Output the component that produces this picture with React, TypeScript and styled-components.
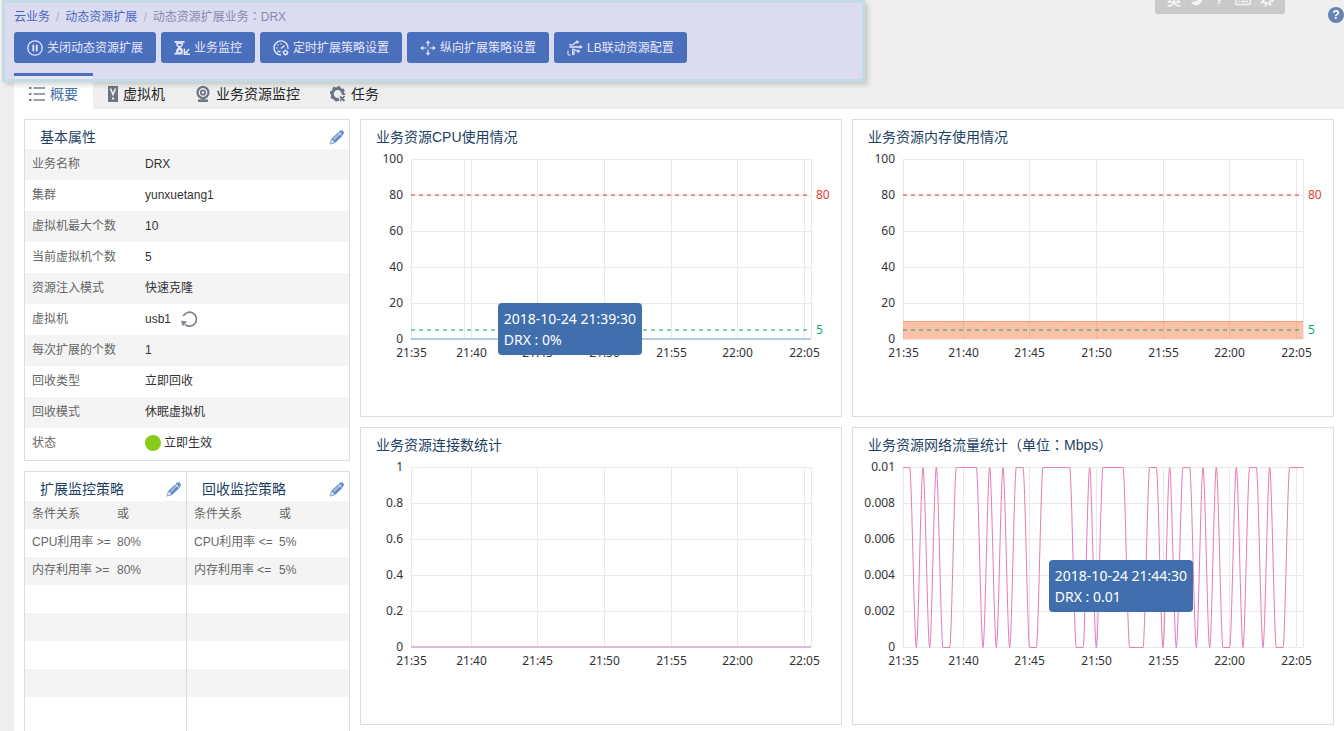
import React, { useLayoutEffect, useRef, useState } from "react";
import styled, { createGlobalStyle } from "styled-components";

const GlobalStyle = createGlobalStyle`
  *, *::before, *::after { box-sizing: border-box; }
  body {
    margin: 0;
    background: #efefef;
    color: #333;
    font: 12px/18px "Liberation Sans", "Noto Sans CJK SC", sans-serif;
  }
  button { font: inherit; }
`;

const Shell = styled.div`
  position: relative;
  display: flex;
  flex-direction: column;
  height: 100vh;
  overflow: hidden;
`;

const Header = styled.header`
  display: flex;
  flex-direction: column;
  gap: 6px;
  padding: 8px 14px 10px;
`;

const Breadcrumb = styled.nav`
  display: flex;
  gap: 6px;
  color: #77798a;
`;

const Crumb = styled.a`
  color: #144ba8;
  text-decoration: none;
`;

const Slash = styled.span`
  color: #aaabb5;
`;

/* Full-width punctuation centred in its cell */
const Punctuation = styled.span`
  font-family: "Noto Sans CJK TC", sans-serif;
  line-height: 1;
`;

const Toolbar = styled.div`
  display: flex;
  gap: 5px;
`;

const ToolButton = styled.button`
  display: flex;
  align-items: center;
  gap: 4px;
  height: 31px;
  padding: 1px 13px 0;
  border: 0;
  border-radius: 3px;
  background: #1f54a5;
  color: #fff;
  white-space: nowrap;
`;

const Highlight = styled.div`
  position: absolute;
  top: 0;
  left: 2px;
  width: 863px;
  height: 82px;
  border: 3px solid #c3dbe6;
  background: rgba(176, 176, 245, 0.3);
  background-clip: padding-box;
  box-shadow: 3px 3px 5px rgba(0, 0, 0, 0.16);
  pointer-events: none;
`;

const InputMethodBar = styled.div`
  position: absolute;
  top: -14px;
  right: 59px;
  display: flex;
  align-items: center;
  justify-content: space-between;
  width: 130px;
  height: 28px;
  padding: 0 10px 0 12px;
  border-radius: 3px;
  background: #cacaca;
  color: #f3f3f3;
  font-size: 14px;
  font-weight: 700;
`;

const HelpButton = styled.button`
  position: absolute;
  top: 7px;
  right: 0;
  width: 16px;
  height: 16px;
  padding: 0;
  border: 0;
  border-radius: 8px;
  background: #6485b1;
  color: #fff;
  font-weight: 700;
  line-height: 16px;
`;

const Tabs = styled.div`
  display: flex;
  flex: none;
  height: 36px;
  padding-left: 14px;
`;

const Tab = styled.button<{ $active?: boolean }>`
  display: flex;
  align-items: center;
  gap: 5px;
  padding: 3px 15px 0;
  border: 0;
  border-top: 3px solid ${(p) => (p.$active ? "#1f54a5" : "transparent")};
  background: ${(p) => (p.$active ? "#fff" : "transparent")};
  color: ${(p) => (p.$active ? "#4673a8" : "#262626")};
  font-size: 14px;
`;

const Content = styled.main`
  display: grid;
  grid-template-columns: 326px minmax(0, 1fr);
  gap: 10px;
  flex: 1;
  margin-left: 14px;
  padding: 10px;
  background: #fff;
`;

const SideColumn = styled.div`
  display: flex;
  flex-direction: column;
  gap: 10px;
`;

const ChartGrid = styled.div`
  display: grid;
  grid-template-columns: repeat(2, minmax(0, 1fr));
  grid-auto-rows: 298px;
  gap: 10px;
`;

const Panel = styled.section`
  position: relative;
  padding-bottom: 1px;
  border: 1px solid #ddd;
  background: #fff;
`;

const PanelHead = styled.div`
  display: flex;
  align-items: center;
  justify-content: space-between;
  height: 29px;
  padding: 5px 4px 0 15px;
`;

const PanelTitle = styled.h2`
  margin: 0;
  color: #1d3f63;
  font-size: 14px;
  font-weight: 400;
  line-height: 20px;
  white-space: nowrap;
`;

const IconButton = styled.button`
  display: inline-flex;
  padding: 0;
  border: 0;
  background: transparent;
`;

const PolicyPair = styled.div`
  display: grid;
  grid-template-columns: 161px 1fr;
  min-height: 270px;
  border: 1px solid #ddd;
`;

const Policy = styled.section`
  & + & {
    border-left: 1px solid #ddd;
  }
`;

const DataTable = styled.table<{ $rowHeight: number; $labelWidth: number }>`
  width: 100%;
  border-collapse: collapse;
  table-layout: fixed;
  tr {
    height: ${(p) => p.$rowHeight}px;
  }
  tr:nth-child(odd) {
    background: #f4f4f4;
  }
  th,
  td {
    padding: 0 0 2px;
    text-align: left;
    font-weight: 400;
    white-space: nowrap;
  }
  th {
    width: ${(p) => p.$labelWidth}px;
    padding-left: 7px;
    color: #666;
  }
`;

const MutedCell = styled.td`
  color: #666;
`;

const Inline = styled.span<{ $gap: number }>`
  display: flex;
  align-items: center;
  gap: ${(p) => p.$gap}px;
`;

const StatusDot = styled.span`
  width: 16px;
  height: 16px;
  border-radius: 50%;
  background: #89cb1a;
`;

const PlotArea = styled.div`
  height: 266px;
  svg {
    display: block;
  }
  text {
    font: 12px "Noto Sans", sans-serif;
    fill: #333;
  }
`;

const Tooltip = styled.div<{ $left: number; $top: number }>`
  position: absolute;
  left: ${(p) => p.$left}%;
  top: ${(p) => p.$top}px;
  padding: 5px 6px;
  border-radius: 4px;
  background: #416fae;
  color: #fff;
  font: 14px/21px "Noto Sans", sans-serif;
  white-space: nowrap;
`;

/* ---------- icons ---------- */

const iconProps = { width: 16, height: 16, viewBox: "0 0 16 16", fill: "none", "aria-hidden": true };

const PauseIcon = () => (
  <svg {...iconProps} stroke="currentColor">
    <circle cx="8" cy="8" r="7.2" strokeWidth="1.3" />
    <path d="M6.3 4.8v6.4M9.7 4.8v6.4" strokeWidth="1.8" />
  </svg>
);

const HourglassIcon = () => (
  <svg {...iconProps} fill="currentColor">
    <path d="M.5 1h10v1.800H.5zM.5 12.800h8v1.700h-8z" />
    <path d="M2 2.800h7.200c0 2.300-.9 3.700-2.400 4.700 1 .7 1.700 1.500 2 2.800v2.500H2c0-2.600.8-4.100 2.300-5.300C2.800 6.500 2 5.100 2 2.800z" />
    <path d="M3.600 4h4c-.3 1-.9 1.600-2 2.200C4.500 5.600 3.900 5 3.600 4zM3.800 11.800l1.800-2 1.700 2z" fill="#1f54a5" />
    <path d="M10.300 8.500v5.700H16" fill="none" stroke="currentColor" strokeWidth="1.400" />
    <path d="M15.300 9l-2.800 2.800" fill="none" stroke="currentColor" strokeWidth="1.300" />
    <path d="M11.300 13.200l.3-3 2.600 2.700z" />
  </svg>
);

const GaugeIcon = () => (
  <svg {...iconProps} stroke="currentColor" strokeWidth="1.400">
    <path d="M8.200 14.900A7 7 0 1 1 14.900 8.800" />
    <path d="M3.300 8h1.200M4.600 4.500l.8.800M8 3.200v1.200M8 8.600l3.600-3.200M4.500 11.500h3" strokeWidth="1.300" />
    <circle cx="12.500" cy="12.500" r="1.900" />
    <path d="M12.500 9.500v1M12.500 14.600v1M9.600 12.500h1M14.500 12.500h1" strokeWidth="1" />
  </svg>
);

const MoveIcon = () => (
  <svg {...iconProps} fill="currentColor">
    <path d="M7.400 2.500h1.200v4H7.400zM7.400 9.500h1.200v4H7.400zM2.500 7.400h4v1.200h-4zM9.500 7.400h4v1.200h-4z" />
    <path d="M8 .2l2.200 3H5.800zM8 15.800l-2.200-3h4.400zM.2 8l3-2.200v4.400zM15.800 8l-3 2.200V5.800z" />
  </svg>
);

const BalanceIcon = () => (
  <svg {...iconProps} stroke="currentColor" strokeWidth="1.300">
    <path d="M2 4.800h3C7.500 4.800 7 2 10.500 2M2.500 7h11M5 9.200c3.500 0 3.500 2 6 2" />
    <path d="M9.500 0l3 2-3 2zM12.800 5l3 2-3 2zM10.500 9.200l3 2-3 2z" fill="currentColor" stroke="none" />
    <path d="M1 10.500v4.500h2.600M5.500 10.500V15M5 11h2.200v3.500H5M5 12.800h2" strokeWidth="1" />
  </svg>
);

const ListIcon = () => (
  <svg {...iconProps} fill="#7b828c">
    <path d="M0 1h2.500v2H0zM4.500 1.300H16v1.400H4.500zM0 7h2.500v2H0zM4.500 7.300H16v1.400H4.500zM0 13h2.500v2H0zM4.500 13.300H16v1.400H4.500z" />
  </svg>
);

const ServerIcon = () => (
  <svg {...iconProps} width={10} viewBox="0 0 10 16">
    <path d="M0 0h10v16H0z" fill="#6d7580" />
    <path d="M2.500 2.500L5 8.500l2.500-6" stroke="#efefef" strokeWidth="1.600" />
    <path d="M4 11.500h2v2H4z" fill="#efefef" />
  </svg>
);

const WebcamIcon = () => (
  <svg {...iconProps}>
    <circle cx="8" cy="6.500" r="5.500" stroke="#6d7580" strokeWidth="2.200" />
    <circle cx="8" cy="6.500" r="2.200" stroke="#6d7580" strokeWidth="1.800" />
    <path d="M6.500 12h3v1.500H13V16H3v-2.500h3.500z" fill="#6d7580" />
  </svg>
);

const GearTaskIcon = () => (
  <svg {...iconProps} stroke="#6d7580">
    <path d="M9 13.200A5.400 5.400 0 1 1 13 8.800" strokeWidth="3" />
    <circle cx="7.600" cy="7.800" r="6.900" strokeWidth="1.800" strokeDasharray="2.700 2.700" />
    <path d="M9 9h7v7H9z" fill="#efefef" stroke="none" />
    <path d="M10 10.500l4.500 4.500M14.500 10l-4.500 5" strokeWidth="1.800" />
  </svg>
);

const PencilIcon = () => (
  <svg {...iconProps}>
    <path d="M10.500 2.500l3.500 3.500-7.900 7.600L1.500 15l.9-4.900z" fill="#5f88c2" stroke="#85a3cf" strokeWidth="1" />
    <path d="M4 10l7-7 1.300 1.200-7 7.100z" fill="#a6bfe0" />
    <path d="M10 2.600l1.600-1.400h1.800l1.500 1.700v1.500L13.500 6z" fill="#7397ca" />
    <path d="M9.300 3.200l3.600 3.600" stroke="#e9f0f9" />
    <path d="M2.700 10.300l3 3L1 15z" fill="#f2f5fa" stroke="#8ba4c8" strokeWidth=".8" />
  </svg>
);

const RefreshIcon = () => (
  <svg {...iconProps}>
    <path d="M2.200 5A7 7 0 1 1 4 13.600" stroke="#7f858e" strokeWidth="1.700" />
    <path d="M0 9.800l6.200.8-4.600 4.600z" fill="#7f858e" />
  </svg>
);

const MoonIcon = () => (
  <svg {...iconProps} width={14} viewBox="0 0 14 16" fill="currentColor">
    <path d="M9 1c2 5-1 9-8 9 2 3.500 5.500 4 8 2.500C13.500 10 13.500 4 9 1z" />
  </svg>
);

const KeyboardIcon = () => (
  <svg {...iconProps} stroke="currentColor">
    <rect x=".8" y="3" width="14.400" height="9.500" rx="1" strokeWidth="1.500" />
    <path d="M3 6h10M3 9.500h1.500M6 9.500h7" strokeWidth="1.500" />
  </svg>
);

const CogIcon = () => (
  <svg {...iconProps} stroke="currentColor">
    <circle cx="8" cy="7.500" r="4" strokeWidth="2.200" />
    <circle cx="8" cy="7.500" r="6" strokeWidth="2" strokeDasharray="2.360 2.352" />
  </svg>
);

/* ---------- charts ---------- */

const SAMPLES = 60;
const TIME_TICKS = [
  { at: 0, label: "21:35" },
  { at: 9, label: "21:40" },
  { at: 19, label: "21:45" },
  { at: 29, label: "21:50" },
  { at: 39, label: "21:55" },
  { at: 49, label: "22:00" },
  { at: 59, label: "22:05" },
];
const PLOT = { left: 50, right: 30, top: 10, height: 180 };

/* Traffic samples as [value, number of samples in a row] */
const TRAFFIC_RUNS: Array<[number, number]> = [
  [1, 2], [0, 1], [1, 1], [0, 1], [1, 1], [0, 2], [1, 4], [0, 1], [1, 1], [0, 1],
  [1, 1], [0, 1], [1, 2], [0, 2], [1, 5], [0, 2], [1, 1], [0, 1], [1, 4], [0, 3],
  [1, 2], [0, 1], [1, 1], [0, 1], [1, 2], [0, 1], [1, 1], [0, 1], [1, 1], [0, 2],
  [1, 1], [0, 1], [1, 2], [0, 1], [1, 1], [0, 2], [1, 3],
];

const trafficSeries = TRAFFIC_RUNS.flatMap(([value, count]) => Array<number>(count).fill(value));
const flat = (value: number) => Array<number>(SAMPLES + 1).fill(value);

interface Series {
  values: number[];
  color: string;
  width: number;
  area?: string;
}

interface Threshold {
  value: number;
  label: string;
  color: string;
  textColor: string;
}

interface ChartProps {
  title: string;
  yLabels: string[];
  series: Series;
  thresholds?: Threshold[];
  pointerAt?: number;
  tooltip?: { left: number; top: number; lines: string[] };
}

const PERCENT_LIMITS: Threshold[] = [
  { value: 0.8, label: "80", color: "rgba(225,60,50,.52)", textColor: "#e23c34" },
  { value: 0.05, label: "5", color: "rgba(0,170,110,.5)", textColor: "#12a87b" },
];

function withPunctuation(text: string) {
  return text
    .split(/([：（）])/)
    .map((part, i) => (i % 2 ? <Punctuation key={i}>{part}</Punctuation> : part));
}

function Chart({ title, yLabels, series, thresholds = [], pointerAt, tooltip }: ChartProps) {
  const box = useRef<HTMLDivElement>(null);
  const [width, setWidth] = useState(480);

  useLayoutEffect(() => {
    const node = box.current;
    if (!node) return;
    const measure = () => setWidth(Math.round(node.clientWidth));
    measure();
    const observer = new ResizeObserver(measure);
    observer.observe(node);
    return () => observer.disconnect();
  }, []);

  const plotWidth = width - PLOT.left - PLOT.right;
  const bottom = PLOT.top + PLOT.height;
  const right = PLOT.left + plotWidth;
  const x = (i: number) => PLOT.left + (i * plotWidth) / SAMPLES;
  const crisp = (v: number) => Math.floor(v) + 0.5;
  const y = (v: number) => bottom - v * PLOT.height;
  // Hairlines sit on pixel centres, 2px lines on pixel edges
  const lineY = (v: number) => (series.width === 1 ? crisp(y(v)) : y(v));

  const line = series.values
    .map((v, i) => {
      if (i === 0) return `M${x(0)} ${lineY(v)}`;
      const step = x(i) - x(i - 1);
      const from = lineY(series.values[i - 1]);
      const to = lineY(v);
      return `C${x(i - 1) + step * 0.3} ${from} ${x(i) - step * 0.3} ${to} ${x(i)} ${to}`;
    })
    .join("");

  return (
    <Panel>
      <PanelHead>
        <PanelTitle>{withPunctuation(title)}</PanelTitle>
      </PanelHead>
      <PlotArea ref={box}>
        <svg width={width} height={266} role="img" aria-label={title}>
          <g stroke="#e9e9e9">
            {yLabels.map((label, i) => (
              <path key={label} d={`M${PLOT.left} ${PLOT.top + i * 36 + 0.5}H${right}`} />
            ))}
            {TIME_TICKS.map((t) => (
              <path key={t.label} d={`M${crisp(x(t.at))} ${PLOT.top}V${bottom}`} />
            ))}
            <path d={`M${right + 0.5} ${PLOT.top}V${bottom}`} />
            {pointerAt !== undefined && <path d={`M${crisp(x(pointerAt))} ${PLOT.top}V${bottom}`} />}
          </g>
          {yLabels.map((label, i) => (
            <text key={label} x={PLOT.left - 8} y={PLOT.top + i * 36 + 4} textAnchor="end">
              {label}
            </text>
          ))}
          {TIME_TICKS.map((t) => (
            <text key={t.label} x={crisp(x(t.at))} y={bottom + 18} textAnchor="middle">
              {t.label}
            </text>
          ))}
          {series.area && <path d={`${line}V${bottom}H${PLOT.left}Z`} fill={series.area} />}
          <path d={line} fill="none" stroke={series.color} strokeWidth={series.width} />
          {thresholds.map((t) => (
            <g key={t.label}>
              <path
                d={`M${PLOT.left} ${y(t.value)}H${right}`}
                stroke={t.color}
                strokeWidth={2}
                strokeDasharray="4 4"
              />
              <text x={right + 5} y={y(t.value) + 4} style={{ fill: t.textColor }}>
                {t.label}
              </text>
            </g>
          ))}
        </svg>
      </PlotArea>
      {tooltip && (
        <Tooltip $left={tooltip.left} $top={tooltip.top}>
          {tooltip.lines.map((l) => (
            <div key={l}>{l}</div>
          ))}
        </Tooltip>
      )}
    </Panel>
  );
}

/* ---------- page data ---------- */

const TOOLS = [
  { label: "关闭动态资源扩展", Icon: PauseIcon },
  { label: "业务监控", Icon: HourglassIcon },
  { label: "定时扩展策略设置", Icon: GaugeIcon },
  { label: "纵向扩展策略设置", Icon: MoveIcon },
  { label: "LB联动资源配置", Icon: BalanceIcon },
];

const TABS = [
  { label: "概要", Icon: ListIcon },
  { label: "虚拟机", Icon: ServerIcon },
  { label: "业务资源监控", Icon: WebcamIcon },
  { label: "任务", Icon: GearTaskIcon },
];

const PROPERTIES: Array<[string, React.ReactNode]> = [
  ["业务名称", "DRX"],
  ["集群", "yunxuetang1"],
  ["虚拟机最大个数", "10"],
  ["当前虚拟机个数", "5"],
  ["资源注入模式", "快速克隆"],
  [
    "虚拟机",
    <Inline $gap={10}>
      usb1
      <IconButton aria-label="刷新">
        <RefreshIcon />
      </IconButton>
    </Inline>,
  ],
  ["每次扩展的个数", "1"],
  ["回收类型", "立即回收"],
  ["回收模式", "休眠虚拟机"],
  [
    "状态",
    <Inline $gap={3}>
      <StatusDot />
      立即生效
    </Inline>,
  ],
];

const POLICIES = [
  { title: "扩展监控策略", rows: [["条件关系", "或"], ["CPU利用率 >=", "80%"], ["内存利用率 >=", "80%"]] },
  { title: "回收监控策略", rows: [["条件关系", "或"], ["CPU利用率 <=", "5%"], ["内存利用率 <=", "5%"]] },
];
const POLICY_ROWS = 7;

const PERCENT_LABELS = ["100", "80", "60", "40", "20", "0"];

export default function App() {
  return (
    <Shell>
      <GlobalStyle />
      <Header>
        <Breadcrumb>
          <Crumb href="#">云业务</Crumb>
          <Slash>/</Slash>
          <Crumb href="#">动态资源扩展</Crumb>
          <Slash>/</Slash>
          <span>{withPunctuation("动态资源扩展业务：DRX")}</span>
        </Breadcrumb>
        <Toolbar>
          {TOOLS.map(({ label, Icon }) => (
            <ToolButton key={label}>
              <Icon />
              {label}
            </ToolButton>
          ))}
        </Toolbar>
      </Header>
      <Tabs role="tablist">
        {TABS.map(({ label, Icon }, i) => (
          <Tab key={label} role="tab" aria-selected={i === 0} $active={i === 0}>
            <Icon />
            {label}
          </Tab>
        ))}
      </Tabs>
      <Highlight />
      <InputMethodBar>
        <span>英</span>
        <MoonIcon />
        <Punctuation>，</Punctuation>
        <KeyboardIcon />
        <CogIcon />
      </InputMethodBar>
      <HelpButton aria-label="帮助">?</HelpButton>

      <Content>
        <SideColumn>
          <Panel>
            <PanelHead>
              <PanelTitle>基本属性</PanelTitle>
              <IconButton aria-label="编辑基本属性">
                <PencilIcon />
              </IconButton>
            </PanelHead>
            <DataTable $rowHeight={31} $labelWidth={120}>
              <tbody>
                {PROPERTIES.map(([label, value]) => (
                  <tr key={label}>
                    <th scope="row">{label}</th>
                    <td>{value}</td>
                  </tr>
                ))}
              </tbody>
            </DataTable>
          </Panel>
          <PolicyPair>
            {POLICIES.map((policy) => (
              <Policy key={policy.title}>
                <PanelHead>
                  <PanelTitle>{policy.title}</PanelTitle>
                  <IconButton aria-label={`编辑${policy.title}`}>
                    <PencilIcon />
                  </IconButton>
                </PanelHead>
                <DataTable $rowHeight={28} $labelWidth={92}>
                  <tbody>
                    {Array.from({ length: POLICY_ROWS }, (_, i) => (
                      <tr key={i}>
                        <th scope="row">{policy.rows[i]?.[0]}</th>
                        <MutedCell>{policy.rows[i]?.[1]}</MutedCell>
                      </tr>
                    ))}
                  </tbody>
                </DataTable>
              </Policy>
            ))}
          </PolicyPair>
        </SideColumn>

        <ChartGrid>
          <Chart
            title="业务资源CPU使用情况"
            yLabels={PERCENT_LABELS}
            series={{ values: flat(0), color: "#b4cbe3", width: 2 }}
            thresholds={PERCENT_LIMITS}
            pointerAt={8}
            tooltip={{ left: 28.5, top: 183, lines: ["2018-10-24 21:39:30", "DRX : 0%"] }}
          />
          <Chart
            title="业务资源内存使用情况"
            yLabels={PERCENT_LABELS}
            series={{ values: flat(0.1), color: "#f79a70", width: 1, area: "rgba(255,118,62,.45)" }}
            thresholds={PERCENT_LIMITS}
          />
          <Chart
            title="业务资源连接数统计"
            yLabels={["1", "0.8", "0.6", "0.4", "0.2", "0"]}
            series={{ values: flat(0), color: "#dcbcdc", width: 2 }}
          />
          <Chart
            title="业务资源网络流量统计（单位：Mbps）"
            yLabels={["0.01", "0.008", "0.006", "0.004", "0.002", "0"]}
            series={{ values: trafficSeries, color: "#e67ab3", width: 1 }}
            tooltip={{ left: 40.8, top: 132, lines: ["2018-10-24 21:44:30", "DRX : 0.01"] }}
          />
        </ChartGrid>
      </Content>
    </Shell>
  );
}
